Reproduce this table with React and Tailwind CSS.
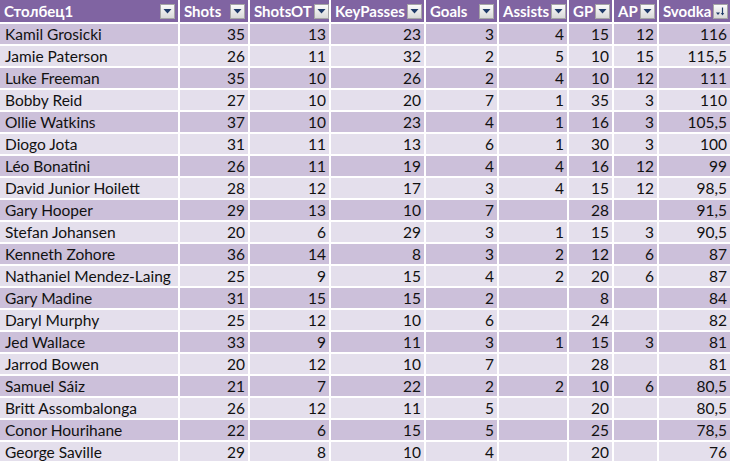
import React from "react";

const headers = [
  "Столбец1",
  "Shots",
  "ShotsOT",
  "KeyPasses",
  "Goals",
  "Assists",
  "GP",
  "AP",
  "Svodka",
];

const rows = [
  ["Kamil Grosicki", 35, 13, 23, 3, 4, 15, 12, "116"],
  ["Jamie Paterson", 26, 11, 32, 2, 5, 10, 15, "115,5"],
  ["Luke Freeman", 35, 10, 26, 2, 4, 10, 12, "111"],
  ["Bobby Reid", 27, 10, 20, 7, 1, 35, 3, "110"],
  ["Ollie Watkins", 37, 10, 23, 4, 1, 16, 3, "105,5"],
  ["Diogo Jota", 31, 11, 13, 6, 1, 30, 3, "100"],
  ["Léo Bonatini", 26, 11, 19, 4, 4, 16, 12, "99"],
  ["David Junior Hoilett", 28, 12, 17, 3, 4, 15, 12, "98,5"],
  ["Gary Hooper", 29, 13, 10, 7, "", 28, "", "91,5"],
  ["Stefan Johansen", 20, 6, 29, 3, 1, 15, 3, "90,5"],
  ["Kenneth Zohore", 36, 14, 8, 3, 2, 12, 6, "87"],
  ["Nathaniel Mendez-Laing", 25, 9, 15, 4, 2, 20, 6, "87"],
  ["Gary Madine", 31, 15, 15, 2, "", 8, "", "84"],
  ["Daryl Murphy", 25, 12, 10, 6, "", 24, "", "82"],
  ["Jed Wallace", 33, 9, 11, 3, 1, 15, 3, "81"],
  ["Jarrod Bowen", 20, 12, 10, 7, "", 28, "", "81"],
  ["Samuel Sáiz", 21, 7, 22, 2, 2, 10, 6, "80,5"],
  ["Britt Assombalonga", 26, 12, 11, 5, "", 20, "", "80,5"],
  ["Conor Hourihane", 22, 6, 15, 5, "", 25, "", "78,5"],
  ["George Saville", 29, 8, 10, 4, "", 20, "", "76"],
];

const FilterButton = ({ sorted }) => (
  <div className="w-[15px] h-[15px] border border-[#a6a6a6] bg-gradient-to-b from-[#fbfbfb] to-[#d9d9d9] flex items-center justify-center shrink-0">
    {sorted ? (
      <svg width="11" height="11" viewBox="0 0 11 11">
        <path d="M1 6.5h4l-2 2.5z" fill="#1f3a68" />
        <path d="M7.5 1.5v7" stroke="#1f3a68" strokeWidth="1.2" />
        <path d="M5.8 7l1.7 2.5 1.7-2.5z" fill="#1f3a68" />
      </svg>
    ) : (
      <svg width="9" height="6" viewBox="0 0 9 6">
        <path d="M0.5 1h8l-4 4.5z" fill="#1f3a68" />
      </svg>
    )}
  </div>
);

const App = () => {
  return (
    <div className="w-[730px] h-[461px] overflow-hidden bg-white font-['Lato',sans-serif] text-[15.5px] text-[#111]">
      <div className="grid grid-cols-[178px_68px_79px_93px_71px_68px_43px_43px_71px] gap-[2px] bg-white">
        {headers.map((h, i) => (
          <div
            key={h}
            className="h-[22px] bg-[#8064a2] text-white text-[15px] font-bold flex items-center justify-between pl-[4px] pr-[3px] gap-[2px]"
          >
            <span className="leading-none whitespace-nowrap">{h}</span>
            <FilterButton sorted={i === headers.length - 1} />
          </div>
        ))}
        {rows.map((r, ri) =>
          r.map((c, ci) => (
            <div
              key={ri + "-" + ci}
              className={
                "h-[20px] pt-[2px] flex items-center leading-none whitespace-nowrap " +
                (ri % 2 === 0 ? "bg-[#ccc0da] " : "bg-[#e4dfec] ") +
                (ci === 0 ? "pl-[5px]" : "justify-end pr-[3px]")
              }
            >
              {c}
            </div>
          ))
        )}
      </div>
    </div>
  );
};

export default App;
